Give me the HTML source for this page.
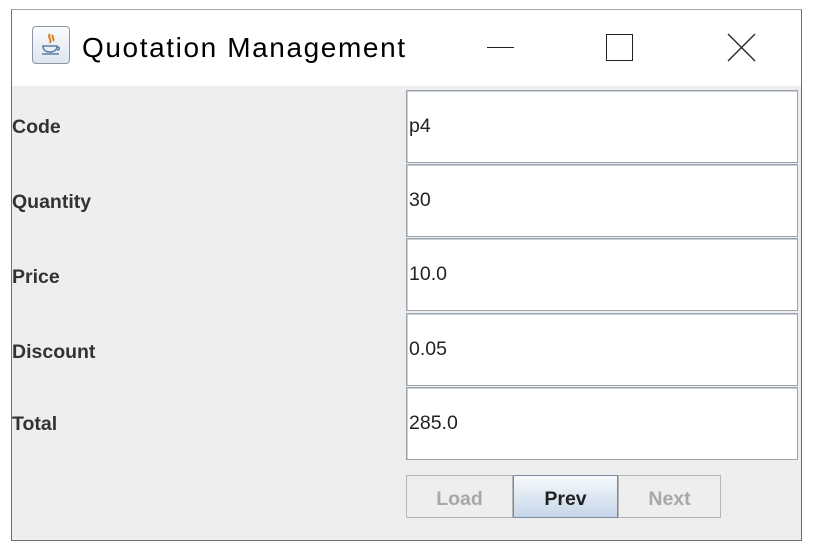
<!DOCTYPE html>
<html><head><meta charset="utf-8"><style>
body{margin:0;width:814px;height:552px;background:#fff;position:relative;overflow:hidden;font-family:"Liberation Sans",Arial,sans-serif}
.win{position:absolute;left:11px;top:9px;width:791px;height:532px;border:1px solid #6f6f6f;border-top-color:#a8a8a8;box-sizing:border-box;background:#fff}
.content{position:absolute;left:12px;top:86px;width:789px;height:454px;background:#eeeeee}
.title{position:absolute;left:82px;top:30px;font-size:28px;letter-spacing:1.6px;color:#000;line-height:36px}
.icon{position:absolute;left:32px;top:26px;width:38px;height:38px;border:1px solid #8a97a6;border-radius:4px;box-sizing:border-box;background:linear-gradient(#fafcfe,#dde5ee)}
.lbl{position:absolute;left:12px;font-size:19.5px;font-weight:bold;color:#333;line-height:22px}
.fld{position:absolute;left:406px;width:392px;height:73px;background:#fff;border:1px solid #9aa3ad;box-shadow:inset 1px 1px 0 #c9d0d8;box-sizing:border-box;font-size:19.5px;color:#222;padding-left:2px;line-height:71px}
.btn{position:absolute;top:475px;height:43px;box-sizing:border-box;border:1px solid #b5b5b5;background:#eeeeee;font-size:19.5px;font-weight:bold;color:#a8a8a8;text-align:center;line-height:46px}
</style></head><body>
<div class="win"></div>
<div class="icon"><svg width="36" height="36" viewBox="0 0 36 36"><path d="M17 7c-3 3 2 5 0 9M20 8c-2 2 2 4 0 6" stroke="#e07a20" stroke-width="2" fill="none"/><path d="M10 19h14c0 4-3 6-7 6s-7-2-7-6zM24 20c3 0 3 3 0 3M9 27h17" stroke="#5b7fa8" stroke-width="1.6" fill="none"/></svg></div>
<div class="title">Quotation Management</div>
<div style="position:absolute;left:487px;top:47px;width:27px;height:1px;background:#222"></div>
<div style="position:absolute;left:606px;top:34px;width:27px;height:27px;border:1.5px solid #222;box-sizing:border-box"></div>
<svg style="position:absolute;left:727px;top:33px" width="29" height="29"><path d="M1 1L28 28M28 1L1 28" stroke="#222" stroke-width="1.3"/></svg>
<div class="content"></div>
<div class="lbl" style="top:116px">Code</div>
<div class="lbl" style="top:191px">Quantity</div>
<div class="lbl" style="top:266px">Price</div>
<div class="lbl" style="top:341px">Discount</div>
<div class="lbl" style="top:413px">Total</div>
<div class="fld" style="top:90px">p4</div>
<div class="fld" style="top:164px">30</div>
<div class="fld" style="top:238px">10.0</div>
<div class="fld" style="top:313px">0.05</div>
<div class="fld" style="top:387px">285.0</div>
<div class="btn" style="left:406px;width:107px">Load</div>
<div class="btn" style="left:513px;width:105px;border-color:#7a8a9c;background:linear-gradient(#f7fafd,#c5d6e8);color:#222">Prev</div>
<div class="btn" style="left:618px;width:103px">Next</div>
</body></html>
